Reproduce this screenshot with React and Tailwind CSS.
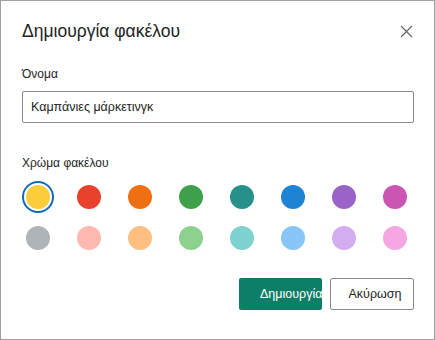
const top = ['#fdcc3b', '#e8412c', '#ee7012', '#3fa04c', '#25918a', '#1e83d2', '#9a63c8', '#cb55b2'];
const bottom = ['#aeb4b7', '#ffb9b0', '#ffbf80', '#8cd18e', '#7ed3d0', '#88c6f7', '#d4adf0', '#f6a7e3'];

function Swatch({ color, selected }) {
  return (
    <div
      className={
        selected
          ? 'w-8 h-8 rounded-full border-2 border-[#0f6cbd] flex items-center justify-center'
          : 'w-8 h-8 flex items-center justify-center'
      }
    >
      <div className="w-6 h-6 rounded-full" style={{ backgroundColor: color }} />
    </div>
  );
}

export default function App() {
  return (
    <div
      className="w-[435px] h-[340px] bg-white border border-[#a0a0a0] pl-[21px] pr-[20px] pt-[18px] text-[#242424]"
      style={{ fontFamily: '"Liberation Sans", Arial, sans-serif' }}
    >
      <div className="flex items-center justify-between h-6">
        <h1 className="text-[17.5px] leading-6">Δημιουργία φακέλου</h1>
        <button className="w-5 h-5 flex items-center justify-center mr-[-2px] text-[#616161]">
          <svg width="13" height="13" viewBox="0 0 13 13" fill="none" stroke="currentColor" strokeWidth="1.1">
            <path d="M1 1L12 12M12 1L1 12" />
          </svg>
        </button>
      </div>

      <label className="block mt-[23px] text-[12px] leading-4">Όνομα</label>
      <div className="mt-[9px] h-8 border border-[#8a8a8a] rounded-[2px] flex items-center px-2 text-[12.5px]">
        Καμπάνιες μάρκετινγκ
      </div>

      <div className="mt-8 text-[12px] leading-4">Χρώμα φακέλου</div>
      <div className="mt-[10px] grid grid-cols-8 gap-x-[19px] gap-y-[9px] w-fit">
        {top.map((c, i) => (
          <Swatch key={c} color={c} selected={i === 0} />
        ))}
        {bottom.map((c) => (
          <Swatch key={c} color={c} />
        ))}
      </div>

      <div className="mt-[24px] flex justify-end gap-2">
        <button className="w-[83px] h-8 bg-[#0e7f67] text-white text-[12.5px] rounded-[2px] pl-[21px] text-left whitespace-nowrap overflow-hidden">
          Δημιουργία
        </button>
        <button className="w-[84px] h-8 border border-[#8a8a8a] text-[12.5px] rounded-[2px] bg-white pl-[6px]">
          Ακύρωση
        </button>
      </div>
    </div>
  );
}
